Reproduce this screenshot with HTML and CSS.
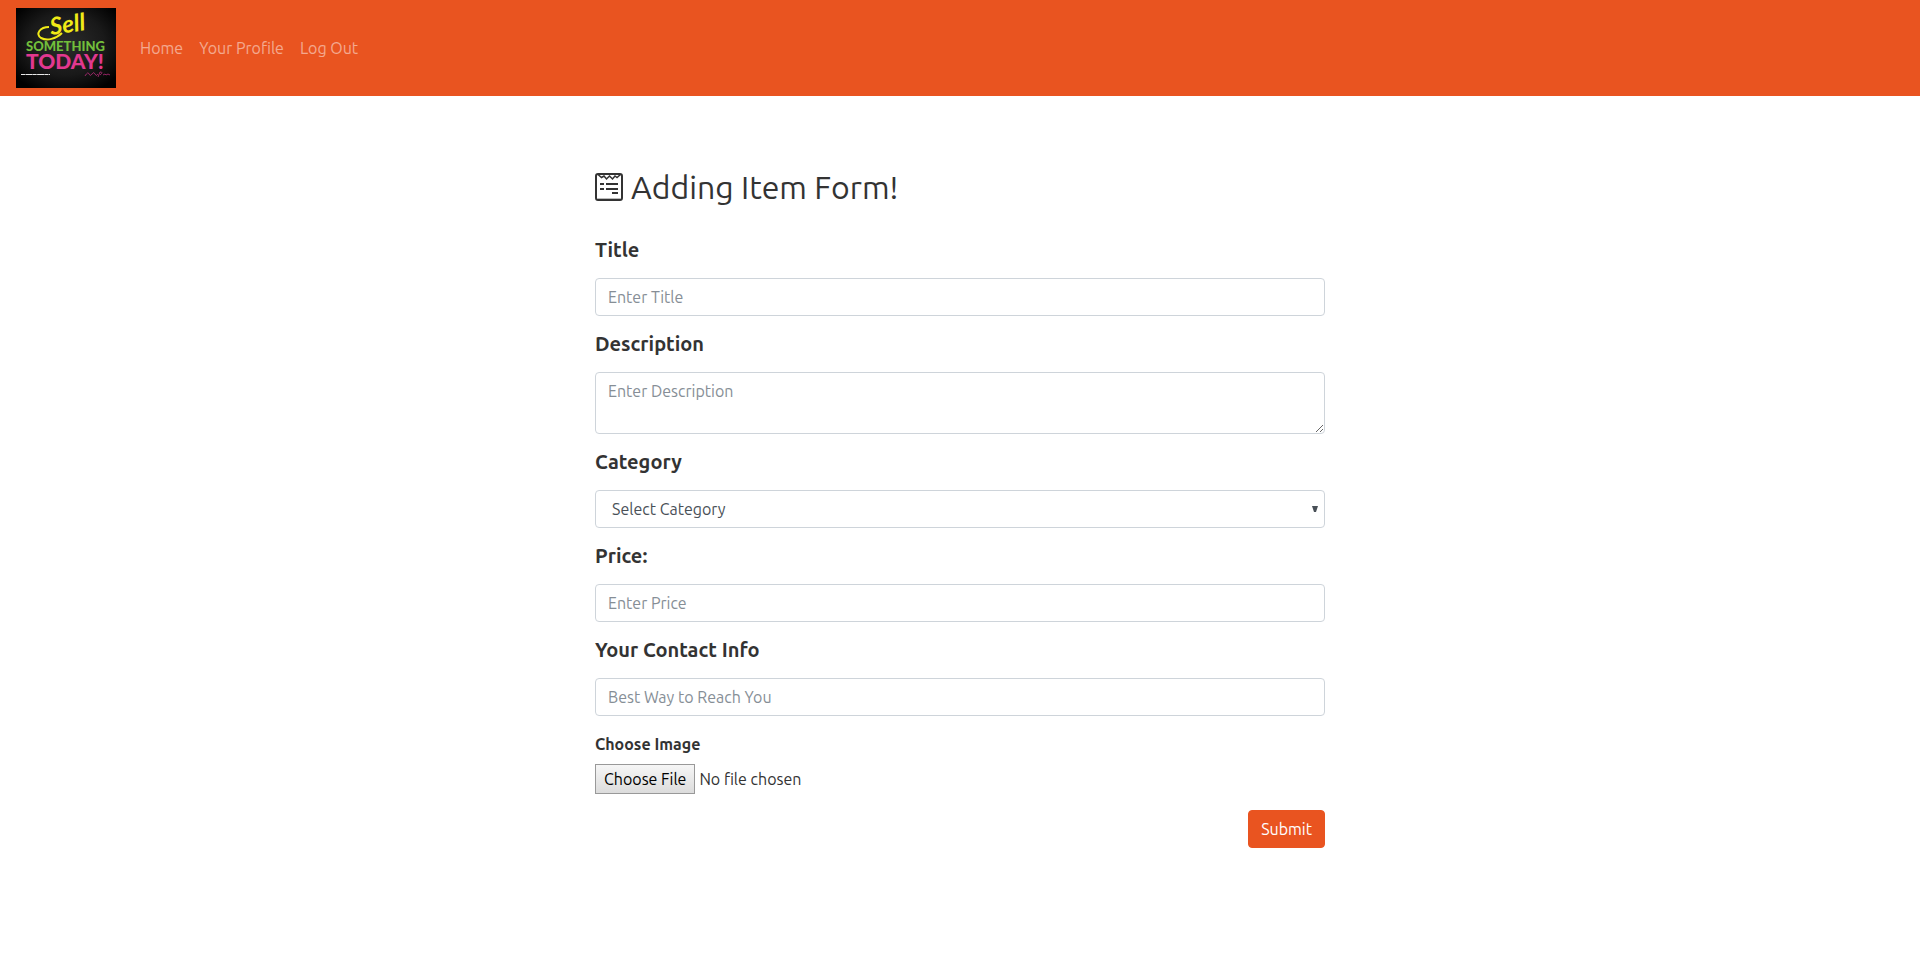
FILE: index.html
```html
<!DOCTYPE html>
<html lang="en">
<head>
<meta charset="utf-8">
<meta name="viewport" content="width=device-width, initial-scale=1">
<title>Add Item</title>
<link rel="stylesheet" href="styles.css">
</head>
<body>
<nav class="navbar">
  <a class="brand" href="#" aria-label="Sell Something Today">
    <svg class="logo" viewBox="0 0 100 80" width="100" height="80">
      <defs>
        <radialGradient id="board" cx="50%" cy="45%" r="65%">
          <stop offset="0" stop-color="#2b2b2b"/>
          <stop offset="0.6" stop-color="#191919"/>
          <stop offset="1" stop-color="#000"/>
        </radialGradient>
      </defs>
      <rect width="100" height="80" fill="url(#board)"/>
      <path d="M33 19C24 19 19 26 25 30C31 33 40 31 46 25" fill="none" stroke="#f0ea17" stroke-width="2"/>
      <text class="logo-sell" x="35" y="27" transform="rotate(-8 35 27)">Sell</text>
      <text class="logo-something" x="10" y="43">SOMETHING</text>
      <text class="logo-today" x="10" y="61">TODAY!</text>
      <path d="M5 66.500H34" stroke="#e8e8e8" stroke-width="1.200" stroke-dasharray="4 .4 7 .3"/>
      <path d="M69 68q3-5 4-2t3 0 3 0 3 0M82 69l2-5q4 0 0 3m3 0l2-1 1 1 2-1 2 1" fill="none" stroke="#b52b78" stroke-width=".8"/>
    </svg>
  </a>
  <ul class="nav-list">
    <li><a class="nav-link" href="#">Home</a></li>
    <li><a class="nav-link" href="#">Your Profile</a></li>
    <li><a class="nav-link" href="#">Log Out</a></li>
  </ul>
</nav>
<main class="container">
  <h2 class="heading">
    <svg class="heading-icon" viewBox="0 0 28 28" width="28" height="28" fill="none" stroke="#333" stroke-width="2" aria-hidden="true">
      <rect x="1" y="1" width="26" height="26" rx="2"/>
      <path d="M3 2l4 3 3-2 4 3.500" stroke="none"/>
      <path d="M3 1.500L6.500 4.500 9 3l2.500 3L14.500 3l3 3L20 3l2 1.500 3.500-3" stroke-width="1.500"/>
      <path d="M5 11h4M11 11h12M5 16h4M11 16h12M17 20h6"/>
      <path d="M2 25.500h24" stroke="#bbb" stroke-width="1"/>
    </svg>
    <span>Adding Item Form!</span>
  </h2>
  <form class="item-form">
    <div class="group">
      <label class="label" for="title">Title</label>
      <input class="control" id="title" type="text" placeholder="Enter Title">
    </div>
    <div class="group">
      <label class="label" for="description">Description</label>
      <textarea class="control control-area" id="description" rows="2" placeholder="Enter Description"></textarea>
    </div>
    <div class="group">
      <label class="label" for="category">Category</label>
      <select class="control control-select" id="category">
        <option>Select Category</option>
      </select>
    </div>
    <div class="group">
      <label class="label" for="price">Price:</label>
      <input class="control" id="price" type="text" placeholder="Enter Price">
    </div>
    <div class="group">
      <label class="label" for="contact">Your Contact Info</label>
      <input class="control" id="contact" type="text" placeholder="Best Way to Reach You">
    </div>
    <div class="group group-file">
      <label class="label label-small" for="image">Choose Image</label>
      <input class="file" id="image" type="file">
    </div>
    <button class="submit" type="submit">Submit</button>
  </form>
</main>
</body>
</html>
```
FILE: styles.css
```css
*,
*::before,
*::after {
  box-sizing: border-box;
}

body {
  margin: 0;
  background: #fff;
  color: #333;
  font-family: Ubuntu, "Noto Sans", sans-serif;
  font-size: 16px;
  line-height: 24px;
}

.navbar {
  display: flex;
  align-items: center;
  gap: 16px;
  padding: 8px 16px;
  background: #e95420;
}

.brand,
.logo {
  display: block;
}

.logo-sell {
  fill: #f0ea17;
  font: italic 700 24px Lato, sans-serif;
}

.logo-something {
  fill: #72bf3b;
  font: 900 13px Lato, sans-serif;
}

.logo-today {
  fill: #e2388f;
  font: 900 21px Lato, sans-serif;
}

.nav-list {
  display: flex;
  margin: 0;
  padding: 0;
  list-style: none;
}

.nav-link {
  display: block;
  padding: 8px;
  color: rgba(255, 255, 255, 0.5);
  text-decoration: none;
}

.container {
  max-width: 760px;
  margin: 0 auto;
  padding: 72px 15px 16px;
}

.heading {
  display: flex;
  align-items: center;
  gap: 8px;
  margin: 0 0 32px;
  font-size: 32px;
  font-weight: 400;
  line-height: 38px;
}

.item-form,
.group {
  display: flex;
  flex-direction: column;
}

.item-form {
  gap: 16px;
}

.group {
  gap: 16px;
}

.group-file {
  gap: 8px;
}

.label {
  font-size: 20px;
  font-weight: 700;
}

.label-small {
  font-size: 16px;
}

.control {
  width: 100%;
  height: 38px;
  padding: 6px 12px;
  border: 1px solid #ced4da;
  border-radius: 4px;
  background: #fff;
  color: #495057;
  font-family: inherit;
  font-size: 16px;
  line-height: 24px;
}

.control::placeholder {
  color: #868e96;
  opacity: 1;
}

.control-area {
  display: block;
  height: 62px;
  resize: vertical;
}

.control-select {
  padding: 6px 16px;
  appearance: none;
  background: #fff url("data:image/svg+xml,%3Csvg xmlns='http://www.w3.org/2000/svg' width='6' height='6'%3E%3Cpath d='M0 0h6L4 6H2z' fill='%23495057'/%3E%3C/svg%3E") no-repeat right 6px center;
}

.file {
  width: 100%;
  height: 30px;
  color: #333;
  font-family: inherit;
  font-size: 16px;
  line-height: 24px;
}

.file::file-selector-button {
  height: 30px;
  margin: 0 4px 0 0;
  padding: 0 8px;
  border: 1px solid #999;
  border-radius: 0;
  background: linear-gradient(#f6f6f6, #dcdcdc);
  color: #000;
  font: inherit;
}

.submit {
  align-self: flex-end;
  padding: 6px 12px;
  border: 1px solid #e95420;
  border-radius: 4px;
  background: #e95420;
  color: #fff;
  font-family: inherit;
  font-size: 16px;
  line-height: 24px;
}
```
